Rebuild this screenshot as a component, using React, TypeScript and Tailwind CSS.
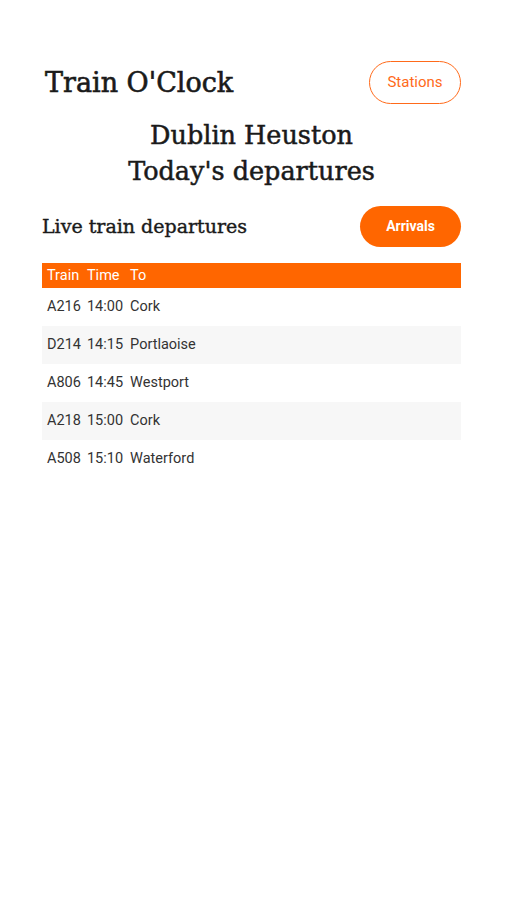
import React from "react";

const rows = [
  ["A216", "14:00", "Cork"],
  ["D214", "14:15", "Portlaoise"],
  ["A806", "14:45", "Westport"],
  ["A218", "15:00", "Cork"],
  ["A508", "15:10", "Waterford"],
];

export default function App() {
  const slab = { fontFamily: '"DejaVu Serif", "Liberation Serif", serif' };
  return (
    <div className="w-[506px] h-[900px] bg-white" style={{ fontFamily: "Roboto, sans-serif" }}>
      <div className="pl-[42px] pr-[45px] pt-[61px]">
        <div className="flex items-center justify-between">
          <h1 className="text-[27px] leading-none text-[#1a1a1a] pl-[3px] [-webkit-text-stroke:0.6px_#1a1a1a]" style={slab}>Train O'Clock</h1>
          <button className="w-[92px] h-[43px] rounded-full border border-[#ff6a1a] text-[#ff6a1a] text-[15px]">
            Stations
          </button>
        </div>
        <div className="mt-[13px] text-center text-[25.5px] leading-[36px] text-[#1a1a1a] [-webkit-text-stroke:0.5px_#1a1a1a]" style={slab}>
          <div>Dublin Heuston</div>
          <div>Today's departures</div>
        </div>
        <div className="mt-[17px] flex items-center justify-between">
          <h2 className="text-[19px] text-[#1a1a1a] [-webkit-text-stroke:0.4px_#1a1a1a]" style={slab}>Live train departures</h2>
          <button className="w-[101px] h-[41px] rounded-full bg-[#ff6600] text-white text-[14px] font-bold">
            Arrivals
          </button>
        </div>
        <table className="mt-[16px] w-full border-collapse text-[14.5px]">
          <thead>
            <tr className="bg-[#ff6600] text-white h-[25px]">
              <th className="font-normal text-left pl-[5px] w-0 whitespace-nowrap">Train</th>
              <th className="font-normal text-left pl-[6px] w-0 whitespace-nowrap">Time</th>
              <th className="font-normal text-left pl-[7px]">To</th>
            </tr>
          </thead>
          <tbody>
            {rows.map((r, i) => (
              <tr key={i} className={`h-[38px] text-[#333] ${i % 2 === 1 ? "bg-[#f7f7f7]" : "bg-white"}`}>
                <td className="pl-[5px] whitespace-nowrap">{r[0]}</td>
                <td className="pl-[6px] whitespace-nowrap">{r[1]}</td>
                <td className="pl-[7px]">{r[2]}</td>
              </tr>
            ))}
          </tbody>
        </table>
      </div>
    </div>
  );
}
